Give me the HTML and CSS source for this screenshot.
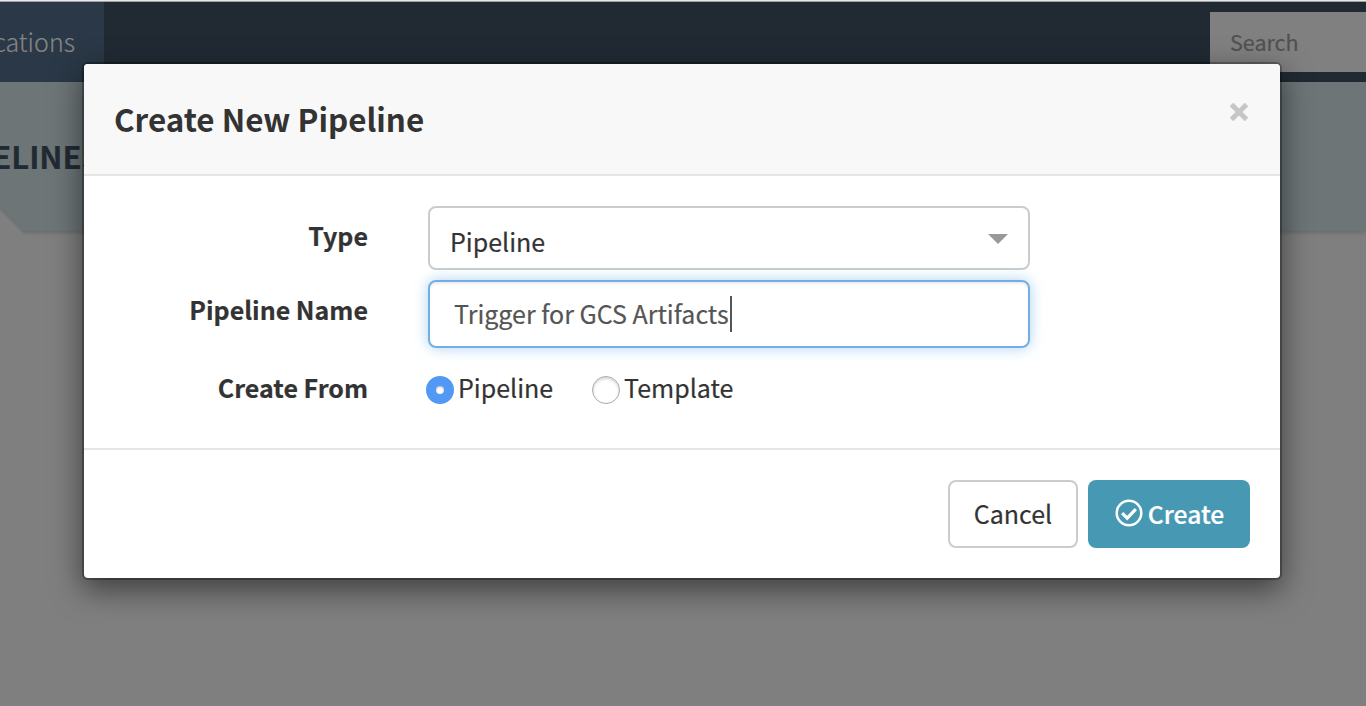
FILE: index.html
```html
<!DOCTYPE html>
<html lang="en">
<head>
<meta charset="utf-8">
<title>Create New Pipeline</title>
<link rel="stylesheet" href="styles.css">
</head>
<body>
<div class="page">
  <header class="topbar">
    <div class="nav-tab"><span class="nav-label">Applications</span></div>
    <div class="search">Search</div>
  </header>
  <div class="band"><span class="band-title">PIPELINES</span></div>
  <svg class="band-notch" width="26" height="26" viewBox="0 0 26 26"><path d="M0 0L26 26H0Z" fill="#7f7f7f"/></svg>
</div>
<section class="modal" role="dialog">
  <header class="modal-header">
    <h1 class="modal-title">Create New Pipeline</h1>
    <svg class="close" width="20" height="20" viewBox="0 0 20 20"><path d="M2.5 2.5L17.5 17.5M17.5 2.5L2.5 17.5" stroke="#c6c6c6" stroke-width="5"/></svg>
  </header>
  <div class="modal-body">
    <div class="row row-type">
      <div class="label"><span class="label-type">Type</span></div>
      <div class="select"><span class="select-value">Pipeline</span><svg width="20" height="10" viewBox="0 0 20 10"><path d="M0 0H20L10 10Z" fill="#999"/></svg></div>
    </div>
    <div class="row row-name">
      <div class="label"><span class="label-name">Pipeline Name</span></div>
      <div class="input"><span class="input-value">Trigger for GCS Artifacts</span><span class="caret"></span></div>
    </div>
    <div class="row row-from">
      <div class="label"><span class="label-from">Create From</span></div>
      <div class="radios">
        <span class="radio radio-on"></span><span class="radio-text first">Pipeline</span>
        <span class="radio"></span><span class="radio-text">Template</span>
      </div>
    </div>
  </div>
  <footer class="modal-footer">
    <div class="btn btn-cancel"><span>Cancel</span></div>
    <div class="btn btn-create">
      <svg width="28" height="28" viewBox="0 0 28 28" fill="none" stroke="#fff"><circle cx="14" cy="14" r="12.3" stroke-width="2.5"/><path d="M7.2 14.2L12.2 19.2L20.8 10.2" stroke-width="3.2"/></svg>
      <span>Create</span>
    </div>
  </footer>
</section>
</body>
</html>
```
FILE: styles.css
```css
* { box-sizing: border-box; }
body {
  margin: 0;
  width: 1366px;
  height: 706px;
  overflow: hidden;
  position: relative;
  background: #7f7f7f;
  font-family: "Noto Sans CJK SC", "Noto Sans", sans-serif;
  font-size: 25px;
  line-height: 36px;
  color: #333;
  white-space: nowrap;
  -webkit-text-stroke: .2px;
}
.page { position: relative; }
.topbar {
  height: 82px;
  display: flex;
  justify-content: space-between;
  background: #212a33;
  border-top: 1px solid #e8e8e8;
  box-shadow: inset 0 1px #9fa3a6;
}
.nav-tab {
  width: 104px;
  height: 80px;
  margin-top: 1px;
  padding: 21px 29px 0 0;
  display: flex;
  justify-content: flex-end;
  background: #2a3847;
  color: #858585;
  font-weight: 300;
}
.search {
  width: 156px;
  height: 60px;
  margin-top: 11px;
  padding: 12px 20px;
  background: #808080;
  color: #515151;
  font-size: 21.5px;
}
.band {
  height: 149px;
  width: 1366px;
  padding-top: 56px;
  background: #6d7577;
  box-shadow: 0 2px 4px rgba(0, 0, 0, .16);
}
.band-title {
  display: flex;
  justify-content: flex-end;
  width: 101px;
  color: #212a33;
  font-size: 31px;
  font-weight: 700;
}
.band-notch {
  position: absolute;
  left: 0;
  top: 210px;
}
.modal {
  position: absolute;
  left: 84px;
  top: 64px;
  width: 1196px;
  height: 514px;
  border-radius: 4px;
  background: #fff;
  box-shadow: 0 0 0 2px rgba(0, 0, 0, .27), 0 10px 30px 2px rgba(0, 0, 0, .5);
}
.modal-header {
  height: 112px;
  padding: 37px 31px 0 30px;
  display: flex;
  justify-content: space-between;
  border-bottom: 2px solid #e5e5e5;
  border-radius: 4px 4px 0 0;
  background: #f8f8f8;
}
.modal-title {
  margin: 0;
  font-size: 31.4px;
  line-height: 36px;
  font-weight: 700;
  -webkit-text-stroke: 0;
}
.close { margin-top: 1px; }
.modal-body {
  height: 274px;
  padding-top: 30px;
  border-bottom: 2px solid #e5e5e5;
}
.row { display: flex; }
.label {
  width: 284px;
  margin-right: 60px;
  display: flex;
  justify-content: flex-end;
  font-weight: 700;
}
.row-type { height: 74px; }
.row-type .label { padding-top: 11px; }
.row-name { height: 90px; }
.row-name .label { padding-top: 11px; }
.row-from .label { margin-top: -1px; }
.select, .input {
  width: 602px;
  border: 2px solid #ccc;
  border-radius: 8px;
  display: flex;
}
.select {
  height: 64px;
  padding: 15px 20px 0;
  justify-content: space-between;
}
.select svg { margin-top: 11px; }
.input {
  height: 68px;
  padding: 13px 24px 0;
  border-color: #73ade4;
  color: #555;
  box-shadow: inset 0 2px 2px rgba(0, 0, 0, .075), 0 0 14px rgba(102, 175, 233, .55);
}
.caret {
  width: 2px;
  height: 36px;
  margin: 1px 0 0 1px;
  background: #555;
}
.radios { display: flex; margin: -1px 0 0 -2px; }
.radio {
  width: 28px;
  height: 28px;
  margin: 7px 4px 0 0;
  border: 1px solid #aaa;
  border-radius: 50%;
  box-shadow: inset 0 2px 3px rgba(0, 0, 0, .16);
}
.radio-on {
  border: 10px solid #5299f5;
  box-shadow: inset 0 1px 2px rgba(0, 0, 0, .3);
}
.first { width: 134px; }
.modal-footer {
  padding: 30px 30px 0;
  display: flex;
  justify-content: flex-end;
  gap: 10px;
}
.btn {
  height: 68px;
  border-radius: 8px;
  display: flex;
  justify-content: center;
}
.btn-cancel {
  width: 130px;
  padding-top: 13px;
  border: 2px solid #ccc;
}
.btn-create {
  width: 162px;
  gap: 5px;
  padding: 15px 0 0 1px;
  background: #4799b3;
  color: #fff;
  font-size: 24.7px;
  font-weight: 500;
}
.btn-create svg { margin-top: 4px; }
```
